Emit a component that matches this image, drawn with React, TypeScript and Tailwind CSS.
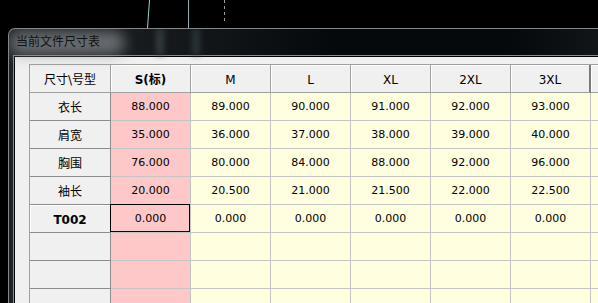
import React from "react";

const cols = ["S(标)", "M", "L", "XL", "2XL", "3XL", ""];
const rows: { label: string; bold?: boolean; values: string[] }[] = [
  { label: "衣长", values: ["88.000", "89.000", "90.000", "91.000", "92.000", "93.000", ""] },
  { label: "肩宽", values: ["35.000", "36.000", "37.000", "38.000", "39.000", "40.000", ""] },
  { label: "胸围", values: ["76.000", "80.000", "84.000", "88.000", "92.000", "96.000", ""] },
  { label: "袖长", values: ["20.000", "20.500", "21.000", "21.500", "22.000", "22.500", ""] },
  { label: "T002", bold: true, values: ["0.000", "0.000", "0.000", "0.000", "0.000", "0.000", ""] },
  { label: "", values: ["", "", "", "", "", "", ""] },
  { label: "", values: ["", "", "", "", "", "", ""] },
  { label: "", values: ["", "", "", "", "", "", ""] },
];

const num = "font-['DejaVu_Sans','Liberation_Sans',sans-serif] text-[11px]";
const cjk = "font-['DejaVu_Sans','Noto_Sans_CJK_SC',sans-serif] text-[12px]";

export default function App() {
  return (
    <div className="relative w-[598px] h-[303px] bg-black overflow-hidden">
      <svg className="absolute inset-0" width="598" height="303">
        <line x1="149.5" y1="0" x2="147.5" y2="28" stroke="#9fcfcf" strokeWidth="1" />
        <line x1="188.5" y1="0" x2="188.5" y2="28" stroke="#8fb3b3" strokeWidth="1" />
        <line x1="224.5" y1="0" x2="224.5" y2="22" stroke="#9a9a9a" strokeWidth="1" strokeDasharray="3 3" />
      </svg>
      <div className="relative ml-[8px] mt-[28px] h-[275px] rounded-tl-[7px] border-l border-t border-[#85888b] bg-[linear-gradient(90deg,#202326_0%,#15181b_30%,#06090c_55%,#06090c_85%,#121518_100%)] overflow-hidden">
        <div className="absolute left-[148px] top-0 w-[6px] h-[26px] bg-[#3a4448] blur-[3px]" />
        <div className="absolute left-[184px] top-0 w-[6px] h-[26px] bg-[#323c40] blur-[3px]" />
        <div className="relative h-[26px] flex items-center pl-[7px]">
          <div className="absolute left-[0px] top-[2px] w-[116px] h-[24px] rounded-full bg-[#8b8f93] opacity-70 blur-[7px]" />
          <span className={`relative ${cjk} text-[#101214] leading-none`}>当前文件尺寸表</span>
        </div>
        <div className="pl-[4px] h-full">
          <div className="h-full border-l border-t border-[#8a8c8e]">
            <div className="h-full border-l border-t border-black bg-[#f0f0f0] pl-[14px] pt-[7px]">
              <div className="border-l border-t border-[#a0a0a0] flex flex-col">
                {/* header row */}
                <div className="flex h-[28px]">
                  <div className={`w-[81px] shrink-0 flex items-center justify-center pt-[2px] border-r border-b border-[#a0a0a0] bg-[#f0f0f0] text-black ${cjk}`}>
                    尺寸\号型
                  </div>
                  {cols.map((c, i) => (
                    <div
                      key={i}
                      className={`w-[80px] shrink-0 flex items-center justify-center pt-[2px] border-b bg-[#f0f0f0] text-black ${
                        i === 5 ? "border-r-2 border-r-[#7a7a7a]" : "border-r"
                      } border-[#a0a0a0] ${
                        i === 0
                          ? "font-bold font-['DejaVu_Sans','Noto_Sans_CJK_SC',sans-serif] text-[12px]"
                          : "font-['DejaVu_Sans','Liberation_Sans',sans-serif] text-[12px]"
                      } shadow-[inset_1px_1px_0_#ffffff]`}
                    >
                      {c}
                    </div>
                  ))}
                </div>
                {rows.map((r, ri) => (
                  <div key={ri} className="flex h-[28px]">
                    <div
                      className={`w-[81px] shrink-0 flex items-center justify-center pt-[2px] border-r border-b border-[#8c8c8c] bg-[#f0f0f0] text-black ${
                        r.bold ? "font-bold font-['DejaVu_Sans',sans-serif] text-[12px] shadow-[inset_1px_1px_0_#ffffff]" : cjk
                      }`}
                    >
                      {r.label}
                    </div>
                    {r.values.map((v, ci) => (
                      <div
                        key={ci}
                        className={`relative w-[80px] shrink-0 flex items-center justify-center pt-[2px] border-r border-b border-[#c4c4c4] text-black ${num} ${
                          ci === 0 ? "bg-[#ffc8c8]" : "bg-[#ffffe0]"
                        }`}
                      >
                        {ri === 4 && ci === 0 && (
                          <div className="absolute -left-px -top-px w-[80px] h-[28px] border border-black" />
                        )}
                        <span className="relative">{v}</span>
                      </div>
                    ))}
                  </div>
                ))}
              </div>
            </div>
          </div>
        </div>
      </div>
    </div>
  );
}
